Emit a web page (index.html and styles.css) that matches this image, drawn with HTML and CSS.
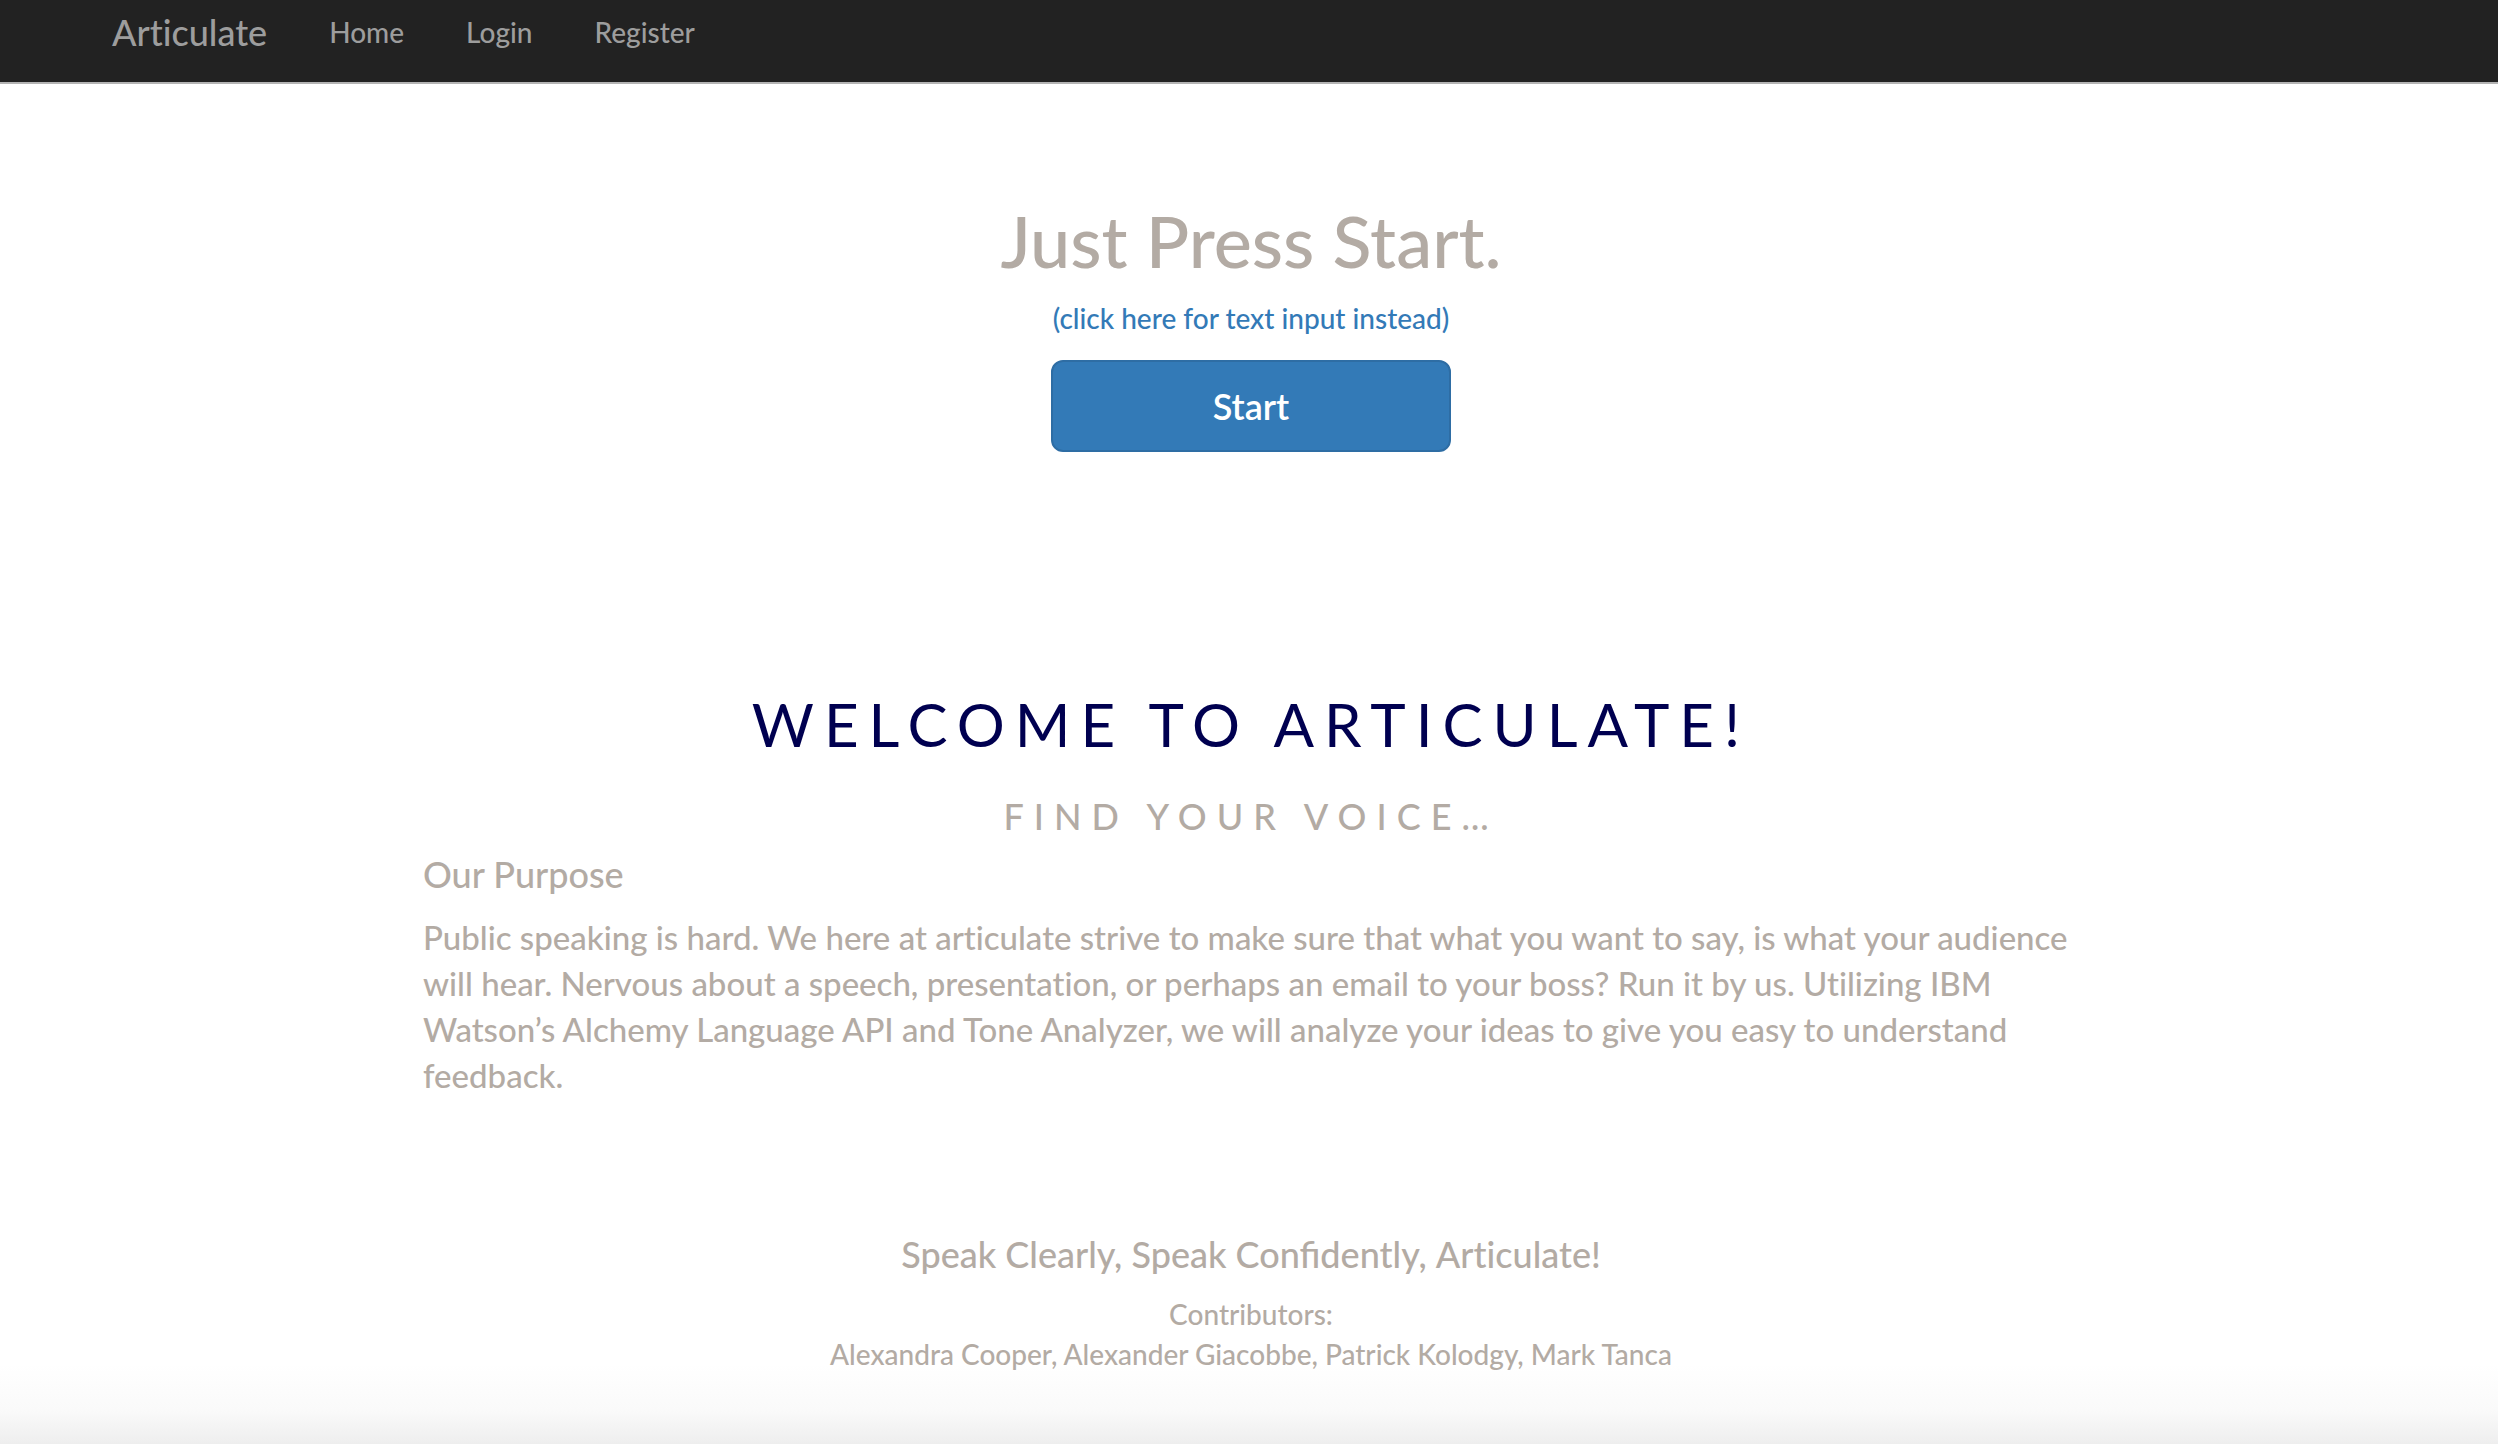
FILE: index.html
```html
<!DOCTYPE html>
<html lang="en">
<head>
<meta charset="utf-8">
<title>Articulate</title>
<link rel="stylesheet" href="styles.css">
</head>
<body>
<nav class="navbar">
  <a class="brand" href="#">Articulate</a>
  <ul class="nav-links">
    <li><a href="#">Home</a></li>
    <li><a href="#">Login</a></li>
    <li><a href="#">Register</a></li>
  </ul>
</nav>
<main>
  <section class="hero">
    <h1 class="hero-title">Just Press Start.</h1>
    <a class="text-link" href="#">(click here for text input instead)</a>
    <button class="start-button" type="button">Start</button>
  </section>
  <section class="intro">
    <h2 class="welcome">Welcome to Articulate!</h2>
    <p class="tagline">Find your voice…</p>
    <h3 class="purpose-title">Our Purpose</h3>
    <p class="purpose-text">Public speaking is hard. We here at articulate strive to make sure that what you want to say, is what your audience will hear. Nervous about a speech, presentation, or perhaps an email to your boss? Run it by us. Utilizing IBM Watson’s Alchemy Language API and Tone Analyzer, we will analyze your ideas to give you easy to understand feedback.</p>
  </section>
</main>
<footer class="footer">
  <p class="slogan">Speak Clearly, Speak Confidently, <span class="name">Articulate!</span></p>
  <p class="contributors">Contributors:<br>Alexandra Cooper, Alexander Giacobbe, Patrick Kolodgy, Mark Tanca</p>
</footer>
</body>
</html>
```
FILE: styles.css
```css
* {
  box-sizing: border-box;
}

body {
  display: flex;
  flex-direction: column;
  min-height: 100vh;
  margin: 0;
  background: #fff;
  color: #b3aba4;
  font-family: Lato, "Liberation Sans", sans-serif;
  font-size: 28px;
  font-weight: 500;
  line-height: 40px;
}

h1, h2, h3, p, ul {
  margin: 0;
  padding: 0;
  font-weight: inherit;
}

a {
  text-decoration: none;
}

main {
  padding-left: 4px;
}

.navbar {
  display: flex;
  align-items: flex-start;
  gap: 62px;
  height: 84px;
  padding: 12px 112px;
  background: #222;
  border-bottom: 2px solid #b4b4b4;
}

.navbar a {
  color: #9d9d9d;
}

.brand {
  font-size: 36px;
}

.brand, .purpose-text, .name {
  font-variant-ligatures: none;
}

.nav-links {
  display: flex;
  gap: 62px;
  list-style: none;
}

.hero {
  display: flex;
  flex-direction: column;
  align-items: center;
  padding-top: 116px;
}

.hero-title {
  font-size: 72px;
  line-height: 80px;
}

.text-link {
  margin-top: 18px;
  color: #337ab7;
}

.start-button {
  width: 400px;
  height: 92px;
  margin-top: 22px;
  border: 2px solid #2e6da4;
  border-radius: 12px;
  background: #337ab7;
  color: #fff;
  font-family: inherit;
  font-size: 36px;
  font-weight: 600;
}

.intro {
  width: 1656px;
  max-width: 90%;
  margin: 0 auto;
  padding-top: 232px;
}

.welcome {
  color: #000050;
  font-size: 60px;
  font-weight: 400;
  line-height: 80px;
  letter-spacing: 10px;
  text-align: center;
  text-transform: uppercase;
}

.tagline {
  margin-top: 32px;
  font-size: 36px;
  letter-spacing: 10px;
  text-align: center;
  text-transform: uppercase;
}

.purpose-title {
  margin-top: 18px;
  font-size: 36px;
}

.purpose-text {
  margin-top: 20px;
  font-size: 33px;
  line-height: 46px;
}

.footer {
  flex-grow: 1;
  padding: 136px 0 66px 4px;
  background: linear-gradient(to top, #eee, #fafafa 34px, #fff 80px);
  text-align: center;
}

.slogan {
  margin-bottom: 20px;
  font-size: 36px;
}
```
